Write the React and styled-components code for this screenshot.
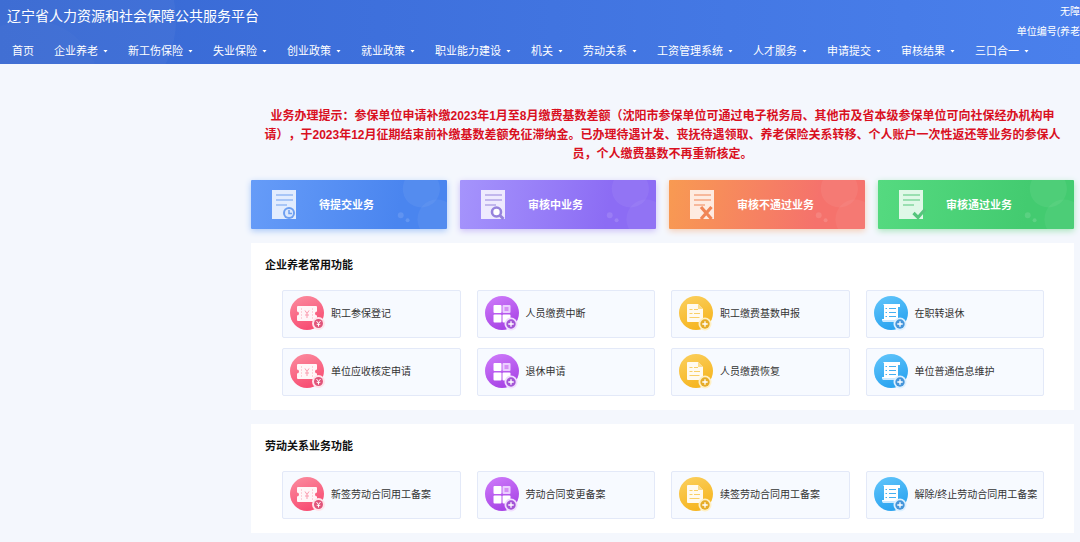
import { useId } from "react";
import styled, { createGlobalStyle } from "styled-components";

const menus = [
  "企业养老",
  "新工伤保险",
  "失业保险",
  "创业政策",
  "就业政策",
  "职业能力建设",
  "机关",
  "劳动关系",
  "工资管理系统",
  "人才服务",
  "申请提交",
  "审核结果",
  "三口合一",
];

const stats = [
  { label: "待提交业务", mark: "clock", from: "#669cf8", to: "#4a85ef", ink: "#6e9ff0", shadow: "#a9c8f8" },
  { label: "审核中业务", mark: "search", from: "#a594fc", to: "#8c6cf4", ink: "#9683dc", shadow: "#cbbff8" },
  { label: "审核不通过业务", mark: "cross", from: "#f89a52", to: "#f5726c", ink: "#f08556", shadow: "#f5cdb4" },
  { label: "审核通过业务", mark: "check", from: "#55da80", to: "#43cb70", ink: "#55c67c", shadow: "#a9e5bd" },
];

const sections = [
  {
    title: "企业养老常用功能",
    items: [
      { label: "职工参保登记", icon: "ticket" },
      { label: "人员缴费中断", icon: "grid" },
      { label: "职工缴费基数申报", icon: "file" },
      { label: "在职转退休", icon: "scroll" },
      { label: "单位应收核定申请", icon: "ticket" },
      { label: "退休申请", icon: "grid" },
      { label: "人员缴费恢复", icon: "file" },
      { label: "单位普通信息维护", icon: "scroll" },
    ],
  },
  {
    title: "劳动关系业务功能",
    items: [
      { label: "新签劳动合同用工备案", icon: "ticket" },
      { label: "劳动合同变更备案", icon: "grid" },
      { label: "续签劳动合同用工备案", icon: "file" },
      { label: "解除/终止劳动合同用工备案", icon: "scroll" },
    ],
  },
];

const palette = {
  ticket: { from: "#fb8ea0", to: "#f84f74", badge: "#e0547a", halo: "#ffe3ea" },
  grid: { from: "#cf7dfb", to: "#a945e6", badge: "#a355d6", halo: "#f1ddff" },
  file: { from: "#fbd060", to: "#f6b622", badge: "#e6ac28", halo: "#fff0c4" },
  scroll: { from: "#63c6fb", to: "#2ba4f0", badge: "#4595da", halo: "#dcf0ff" },
};

export default function App() {
  return (
    <>
      <GlobalStyle />
      <Header>
        <HeaderArt viewBox="0 0 360 64" aria-hidden="true">
          <circle cx="78" cy="20" r="98" fill="#ffffff" opacity="0.04" />
          <circle cx="30" cy="90" r="70" fill="#ffffff" opacity="0.02" />
        </HeaderArt>
        <TopRow>
          <SiteName>辽宁省人力资源和社会保障公共服务平台</SiteName>
          <Account>
            <a href="#accessible">无障</a>
            <span>单位编号(养老</span>
          </Account>
        </TopRow>
        <Nav>
          <HomeLink href="#home">首页</HomeLink>
          {menus.map((name) => (
            <MenuButton key={name} type="button">
              {name}
              <Caret />
            </MenuButton>
          ))}
        </Nav>
      </Header>
      <Main>
        <Notice>
          业务办理提示：参保单位申请补缴2023年1月至8月缴费基数差额（沈阳市参保单位可通过电子税务局、其他市及省本级参保单位可向社保经办机构申请），于2023年12月征期结束前补缴基数差额免征滞纳金。已办理待遇计发、丧抚待遇领取、养老保险关系转移、个人账户一次性返还等业务的参保人员，个人缴费基数不再重新核定。
        </Notice>
        <Stats>
          {stats.map((s) => (
            <StatCard key={s.label} type="button" $from={s.from} $to={s.to} $shadow={s.shadow}>
              <Bubbles viewBox="0 0 60 50" aria-hidden="true">
                <circle cx="34" cy="9" r="19" fill="#ffffff" opacity="0.06" />
                <circle cx="50" cy="40" r="20" fill="#ffffff" opacity="0.05" />
                <circle cx="13" cy="36" r="3" fill="#ffffff" opacity="0.12" />
                <circle cx="20" cy="41" r="2" fill="#ffffff" opacity="0.14" />
              </Bubbles>
              <StatIcon mark={s.mark} ink={s.ink} />
              <span>{s.label}</span>
            </StatCard>
          ))}
        </Stats>
        {sections.map((section) => (
          <Panel key={section.title}>
            <PanelTitle>{section.title}</PanelTitle>
            <FunctionGrid>
              {section.items.map((item) => (
                <FunctionButton key={item.label} type="button">
                  <FunctionIcon kind={item.icon} />
                  <span>{item.label}</span>
                </FunctionButton>
              ))}
            </FunctionGrid>
          </Panel>
        ))}
      </Main>
    </>
  );
}

function StatIcon({ mark, ink }) {
  return (
    <svg width="28" height="32" viewBox="0 0 28 32" fill="none" aria-hidden="true">
      <path d="M0 1h24v29H0z" fill="#ffffff" opacity="0.82" />
      <path d="M4 6h17M4 11h17M4 16h11" stroke={ink} strokeWidth="2" opacity="0.5" />
      {mark === "clock" && (
        <>
          <circle cx="17" cy="24" r="6" fill={ink} />
          <circle cx="17" cy="24" r="4" fill="#dce8fd" />
          <path d="M17 21v3.500h3" stroke={ink} strokeWidth="1.5" />
        </>
      )}
      {mark === "search" && (
        <>
          <circle cx="15.500" cy="23" r="4.500" fill="#ffffff" stroke={ink} strokeWidth="2.600" />
          <path d="M19 26.500l3.500 3.500" stroke={ink} strokeWidth="3" />
        </>
      )}
      {mark === "cross" && (
        <path d="M11 18l10.500 12M21.500 18L11 30" stroke={ink} strokeWidth="3.200" />
      )}
      {mark === "check" && (
        <path d="M14.500 24l4.500 4.500 7-8" stroke={ink} strokeWidth="3.200" />
      )}
    </svg>
  );
}

function FunctionIcon({ kind }) {
  const id = useId();
  const c = palette[kind];

  return (
    <svg width="36" height="36" viewBox="0 0 36 36" fill="none" aria-hidden="true">
      <defs>
        <linearGradient id={id} x1="0" y1="0" x2="0.4" y2="1">
          <stop stopColor={c.from} />
          <stop offset="1" stopColor={c.to} />
        </linearGradient>
      </defs>
      <circle cx="17" cy="17" r="17" fill={`url(#${id})`} />
      {kind === "ticket" && (
        <>
          <path
            d="M8 10h18a1 1 0 0 1 1 1v4.500a2 2 0 0 0 0 4V24a1 1 0 0 1-1 1H8a1 1 0 0 1-1-1v-4.500a2 2 0 0 0 0-4V11a1 1 0 0 1 1-1z"
            fill="#ffffff"
            opacity="0.94"
          />
          <path d="M11.500 12v12M22.500 12v12" stroke="#fdd0d9" strokeDasharray="2 1" />
          <path d="M15 14.500l2 3 2-3M17 17.500V22M15 19h4" stroke="#fa9caf" />
          <circle cx="28.500" cy="27.500" r="6.500" fill={c.halo} />
          <circle cx="28.500" cy="27.500" r="4.500" fill={c.badge} />
          <path d="M26.500 25l2 2.500 2-2.500M28.500 27.500v3M26.700 28.300h3.600" stroke="#ffffff" />
        </>
      )}
      {kind === "grid" && (
        <>
          <rect x="8.500" y="9" width="8" height="8" rx="1" fill="#ffffff" />
          <rect x="17.500" y="9" width="8" height="8" rx="1" fill="#ebcfff" />
          <rect x="19.500" y="11" width="4" height="4" fill="#d58ff5" />
          <rect x="8.500" y="18.500" width="8" height="8" rx="1" fill="#ffffff" />
          <rect x="17.500" y="18.500" width="8" height="8" rx="1" fill="#ffffff" />
        </>
      )}
      {kind === "file" && (
        <>
          <path d="M9 8h10l5 5v13H9a1 1 0 0 1-1-1V9a1 1 0 0 1 1-1z" fill="#fffaf0" />
          <path d="M19 8v5h5z" fill="#fbdc8c" />
          <path d="M10.500 13.500h3M15 13.500h4M10.500 17.500h3M15 17.500h6M10.500 21.500h10" stroke="#f9cf67" strokeWidth="1.200" />
        </>
      )}
      {kind === "scroll" && (
        <>
          <path d="M9 8h17v3h-2v15H11a3 3 0 0 1-3-3h2V9z" fill="#ffffff" />
          <path d="M8 24h15v2H10a2 2 0 0 1-2-2z" fill="#cdeaff" />
          <path d="M11.500 12.500h1.500M15 12.500h7M11.500 16.500h1.500M15 16.500h7M11.500 20.500h1.500M15 20.500h7" stroke="#45b0f2" strokeWidth="1.200" />
        </>
      )}
      {kind !== "ticket" && (
        <>
          <circle cx="26" cy="28" r="6.500" fill={c.halo} />
          <circle cx="26" cy="28" r="4.700" fill={c.badge} />
          <path d="M26 25.300v5.400M23.300 28h5.400" stroke="#ffffff" strokeWidth="1.300" />
        </>
      )}
    </svg>
  );
}

const GlobalStyle = createGlobalStyle`
  * {
    box-sizing: border-box;
  }
  body {
    margin: 0;
    background: #f4f7fd;
    font-family: "Liberation Sans", "Noto Sans CJK SC", sans-serif;
    overflow-x: hidden;
  }
  button {
    border: none;
    background: none;
    padding: 0;
    font: inherit;
    color: inherit;
    cursor: pointer;
  }
  a {
    color: inherit;
    text-decoration: none;
  }
`;

const Header = styled.header`
  position: relative;
  padding: 2px 0 4px;
  background: linear-gradient(90deg, #3768d2 0%, #3e70dc 35%, #4a80ec 100%);
  color: #ffffff;
  overflow: hidden;
`;
const HeaderArt = styled.svg`
  position: absolute;
  left: 0;
  top: 0;
  height: 100%;
`;
const TopRow = styled.div`
  position: relative;
  display: flex;
  justify-content: space-between;
  align-items: flex-start;
  padding-left: 7px;
`;
const SiteName = styled.h1`
  margin: 0;
  font-size: 14px;
  font-weight: 400;
  line-height: 28px;
`;
const Account = styled.div`
  display: flex;
  flex-direction: column;
  align-items: flex-end;
  font-size: 10px;
  line-height: 20px;
  white-space: nowrap;
`;
const Nav = styled.nav`
  position: relative;
  display: flex;
  gap: 20px;
  padding-left: 12px;
  font-size: 11px;
  line-height: 18px;
  white-space: nowrap;
`;
const HomeLink = styled.a`
  color: #ffffff;
`;
const MenuButton = styled.button`
  display: flex;
  align-items: center;
  gap: 5px;
`;
const Caret = styled.i`
  width: 5px;
  height: 3px;
  background: #ffffff;
  clip-path: polygon(0 0, 100% 0, 50% 100%);
`;
const Main = styled.main`
  display: flex;
  flex-direction: column;
  gap: 14px;
  padding: 43px 6px 9px 251px;
`;
const Notice = styled.p`
  margin: 0 0 2px;
  padding: 0 12px;
  font-size: 12px;
  font-weight: 700;
  line-height: 19px;
  text-align: center;
  text-spacing-trim: space-all;
  color: #d9101f;
`;
const Stats = styled.div`
  display: grid;
  grid-template-columns: repeat(4, 1fr);
  gap: 13px;
`;
const StatCard = styled.button`
  position: relative;
  display: flex;
  align-items: center;
  gap: 19px;
  height: 49px;
  padding-left: 21px;
  border-radius: 1px;
  background: linear-gradient(100deg, ${(props) => props.$from}, ${(props) => props.$to} 75%);
  box-shadow: 0 2px 6px ${(props) => props.$shadow};
  font-size: 11px;
  font-weight: 700;
  line-height: 18px;
  color: #ffffff;
`;
const Bubbles = styled.svg`
  position: absolute;
  right: 0;
  top: 0;
  height: 100%;
`;
const Panel = styled.section`
  padding: 12px 30px 14px 31px;
  background: #ffffff;
`;
const PanelTitle = styled.h2`
  margin: 0 0 15px -17px;
  font-size: 11px;
  font-weight: 700;
  line-height: 20px;
  color: #111111;
`;
const FunctionGrid = styled.div`
  display: grid;
  grid-template-columns: repeat(4, 1fr);
  gap: 10px 16px;
`;
const FunctionButton = styled.button`
  display: flex;
  align-items: center;
  gap: 5px;
  height: 48px;
  padding-left: 7px;
  border: 1px solid #e3e9f8;
  border-radius: 2px;
  background: #f7faff;
  font-size: 10px;
  line-height: 16px;
  white-space: nowrap;
  color: #333333;
`;
